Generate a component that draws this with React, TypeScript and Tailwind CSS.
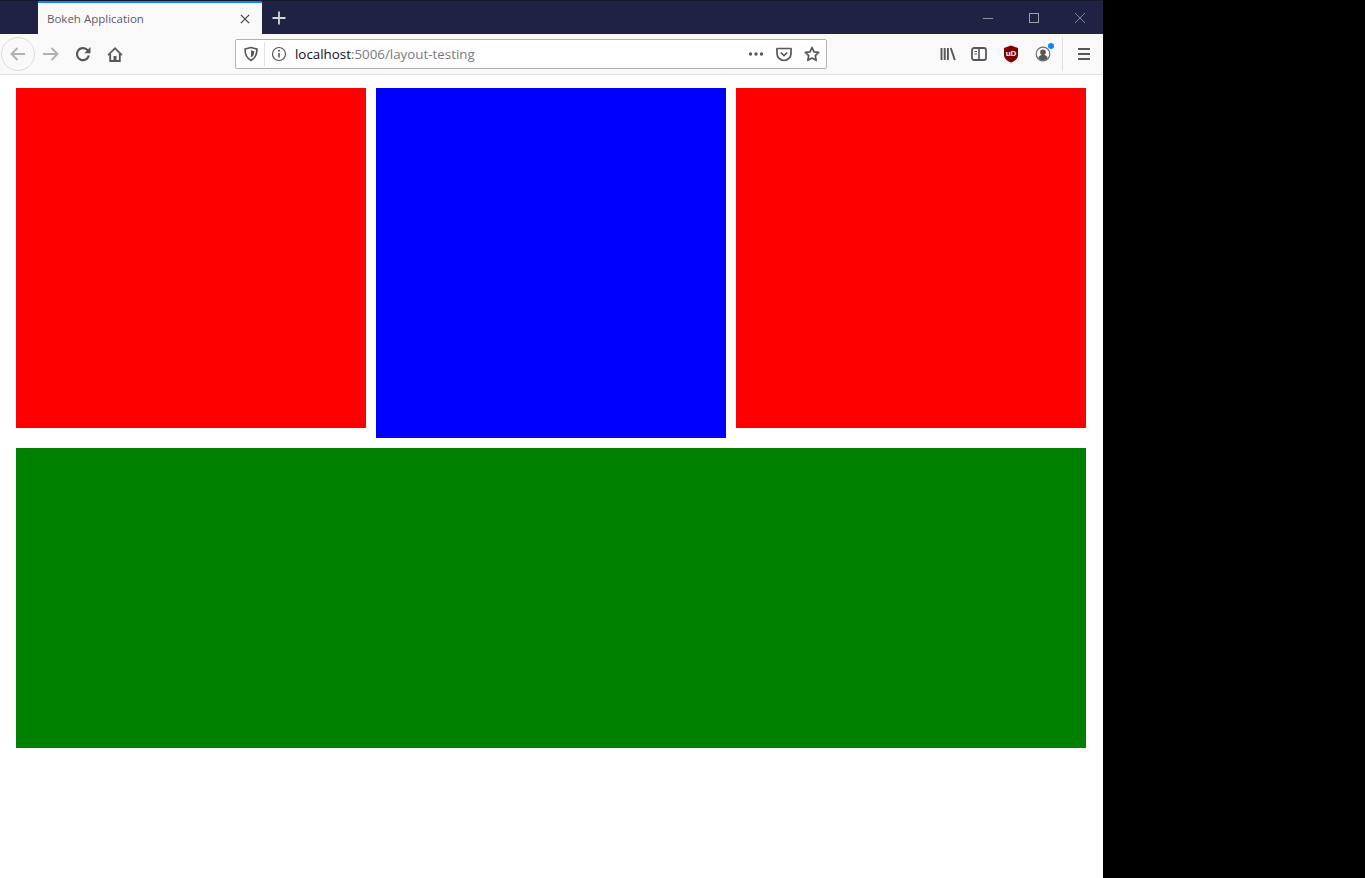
const stroke = '#56565b'

function Ico({ children, size = 16, className = '' }: { children: React.ReactNode; size?: number; className?: string }) {
  return (
    <svg width={size} height={size} viewBox="0 0 16 16" fill="none" className={className}>
      {children}
    </svg>
  )
}

function WindowControls() {
  return (
    <div className="ml-auto flex h-full">
      <div className="flex w-[46px] items-center justify-center">
        <svg width="10" height="10" viewBox="0 0 10 10"><path d="M0 5.500h10" stroke="#8f90a0" /></svg>
      </div>
      <div className="flex w-[46px] items-center justify-center">
        <svg width="10" height="10" viewBox="0 0 10 10"><rect x=".5" y=".5" width="9" height="9" fill="none" stroke="#a0a1ae" /></svg>
      </div>
      <div className="flex w-[46px] items-center justify-center">
        <svg width="10" height="10" viewBox="0 0 10 10"><path d="M0 0l10 10M10 0L0 10" stroke="#8f90a0" strokeWidth=".9" /></svg>
      </div>
    </div>
  )
}

function TitleBar() {
  return (
    <div className="flex h-[34px] items-stretch border-t border-[#15172e] bg-[#1f2242]">
      <div className="ml-[38px] flex w-[224px] flex-col bg-[#f9f9fa]">
        <div className="h-[2px] bg-[#0a84ff]" />
        <div className="flex flex-1 items-center pl-[9px] pr-[11px]">
          <span className="text-[11.5px] leading-none text-[#5b5b66] [font-family:'Open_Sans',sans-serif]">Bokeh Application</span>
          <Ico size={12} className="ml-auto">
            <path d="M2.500 2.500l11 11M13.500 2.500l-11 11" stroke="#4a4a4f" strokeWidth="1.800" />
          </Ico>
        </div>
      </div>
      <div className="flex w-[34px] items-center justify-center">
        <Ico>
          <path d="M8 1.500v13M1.500 8h13" stroke="#d4d4da" strokeWidth="1.800" />
        </Ico>
      </div>
      <WindowControls />
    </div>
  )
}

function NavButtons() {
  return (
    <div className="flex items-center">
      <div className="ml-[1px] flex size-[34px] items-center justify-center rounded-full border border-[#dcdcde]">
        <svg width="18" height="18" viewBox="0 0 18 18" fill="none">
          <path d="M16 9H2.500M8.500 3L2.500 9l6 6" stroke="#b1b1b3" strokeWidth="1.900" />
        </svg>
      </div>
      <div className="ml-[7px] flex size-[18px] items-center justify-center">
        <svg width="18" height="18" viewBox="0 0 18 18" fill="none">
          <path d="M1 9h13.500M9.500 3l6 6-6 6" stroke="#b1b1b3" strokeWidth="1.900" />
        </svg>
      </div>
      <div className="ml-[15px] flex size-[16px] items-center justify-center">
        <Ico>
          <path d="M13.800 9.500A6 6 0 1 1 11.800 3.500L13.800 5.500" stroke={stroke} strokeWidth="2.200" />
          <path d="M15.500 1v6.200H9.300z" fill={stroke} />
        </Ico>
      </div>
      <div className="ml-[16px] flex size-[16px] items-center justify-center">
        <Ico>
          <path d="M.5 8.500L8 1l7.500 7.500-1.200 1.200L8 3.400 1.700 9.700z" fill={stroke} />
          <path d="M3.200 8v7h9.600V8" stroke={stroke} strokeWidth="1.800" />
          <rect x="6.500" y="10" width="3" height="5" fill={stroke} />
        </Ico>
      </div>
    </div>
  )
}

function UrlBar() {
  return (
    <div className="ml-[112px] flex h-[30px] w-[592px] items-center rounded-[2px] border border-[#b1b1b3] bg-white">
      <Ico className="ml-[7px]">
        <path d="M8 1.500l6 1.600c0 5.500-1.500 9-6 11.400C3.500 12.100 2 8.600 2 3.100z" stroke={stroke} strokeWidth="1.600" strokeLinejoin="round" />
        <path d="M8 4.300l3.300.9c0 3-.8 4.900-3.300 6.300z" fill={stroke} />
      </Ico>
      <div className="ml-[5px] h-[24px] w-px bg-[#e2e2e4]" />
      <Ico className="ml-[6px]">
        <circle cx="8" cy="8" r="6.500" stroke={stroke} strokeWidth="1.200" />
        <path d="M8 7v4.500" stroke={stroke} strokeWidth="1.600" />
        <circle cx="8" cy="4.800" r="1" fill={stroke} />
      </Ico>
      <span className="ml-[8px] pt-[2px] text-[13.35px] leading-none text-[#7a7a80] [font-family:'Open_Sans',sans-serif]">
        <span className="text-[#0c0c24]">localhost</span>:5006/layout-testing
      </span>
      <div className="ml-auto flex items-center">
        <Ico>
          <circle cx="2.500" cy="8" r="1.700" fill={stroke} />
          <circle cx="8" cy="8" r="1.700" fill={stroke} />
          <circle cx="13.500" cy="8" r="1.700" fill={stroke} />
        </Ico>
        <Ico className="ml-[12px]">
          <path d="M1 2.500h14v5a7 7 0 0 1-14 0z" stroke={stroke} strokeWidth="1.700" strokeLinejoin="round" />
          <path d="M4.800 6.500L8 9.500l3.200-3" stroke={stroke} strokeWidth="1.700" />
        </Ico>
        <Ico className="ml-[12px] mr-[6px]">
          <path d="M8 1.500l2 4.300 4.700.6-3.400 3.200.9 4.700L8 12l-4.200 2.300.9-4.700L1.300 6.400 6 5.800z" stroke={stroke} strokeWidth="1.700" strokeLinejoin="round" />
        </Ico>
      </div>
    </div>
  )
}

function ToolbarRight() {
  return (
    <div className="ml-auto flex items-center">
      <Ico>
        <path d="M1.500 2v12M4.700 2v12M7.900 2v12" stroke={stroke} strokeWidth="1.900" />
        <path d="M10.800 2l4 12" stroke={stroke} strokeWidth="1.900" />
      </Ico>
      <Ico className="ml-[16px] -translate-x-px">
        <rect x="1" y="2" width="14" height="12" rx="2" stroke={stroke} strokeWidth="1.800" />
        <path d="M8 2v12" stroke={stroke} strokeWidth="1.600" />
        <path d="M3.500 5.500h2.500M3.500 8h2.500" stroke={stroke} />
      </Ico>
      <svg width="16" height="18" viewBox="0 0 16 18" className="ml-[16px] -translate-x-px">
        <path d="M8 .5l7 2.500v7c0 3.500-3 6-7 7.500-4-1.500-7-4-7-7.500V3z" fill="#800000" />
        <text x="8" y="11" textAnchor="middle" fontSize="8" fontWeight="700" fill="#fff" fontFamily="Liberation Sans, sans-serif">uD</text>
      </svg>
      <div className="relative ml-[16px] size-[16px] -translate-x-px">
        <Ico>
          <circle cx="8" cy="8" r="6.800" stroke="#6a6a6f" strokeWidth="1.200" />
          <circle cx="8" cy="6.300" r="2.800" fill={stroke} />
          <path d="M3.200 12.300c1-2.600 2.800-3.500 4.800-3.500s3.800.9 4.800 3.500A6.500 6.500 0 0 1 3.200 12.300z" fill={stroke} />
        </Ico>
        <div className="absolute right-[-3px] top-[-3px] size-[6px] rounded-full bg-[#0a84ff]" />
      </div>
      <div className="ml-[10px] h-[34px] w-px bg-[#e0e0e2]" />
      <Ico className="ml-[13px] mr-[11px]">
        <path d="M2 3h12M2 8h12M2 13h12" stroke={stroke} strokeWidth="1.900" />
      </Ico>
    </div>
  )
}

function Toolbar() {
  return (
    <div className="flex h-[41px] items-center border-b border-[#dedee0] bg-[#f9f9fa]">
      <NavButtons />
      <UrlBar />
      <ToolbarRight />
    </div>
  )
}

export default function App() {
  return (
    <div className="flex h-[878px] overflow-hidden bg-black">
      <div className="h-full w-[1103px] bg-white">
        <TitleBar />
        <Toolbar />
        <div className="px-4 pt-[13px]">
          <div className="flex items-start gap-[10px]">
            <div className="h-[340px] w-[350px] bg-[#ff0000]" />
            <div className="h-[350px] w-[350px] bg-[#0000ff]" />
            <div className="h-[340px] w-[350px] bg-[#ff0000]" />
          </div>
          <div className="mt-[10px] h-[300px] w-[1070px] bg-[#008000]" />
        </div>
      </div>
    </div>
  )
}
